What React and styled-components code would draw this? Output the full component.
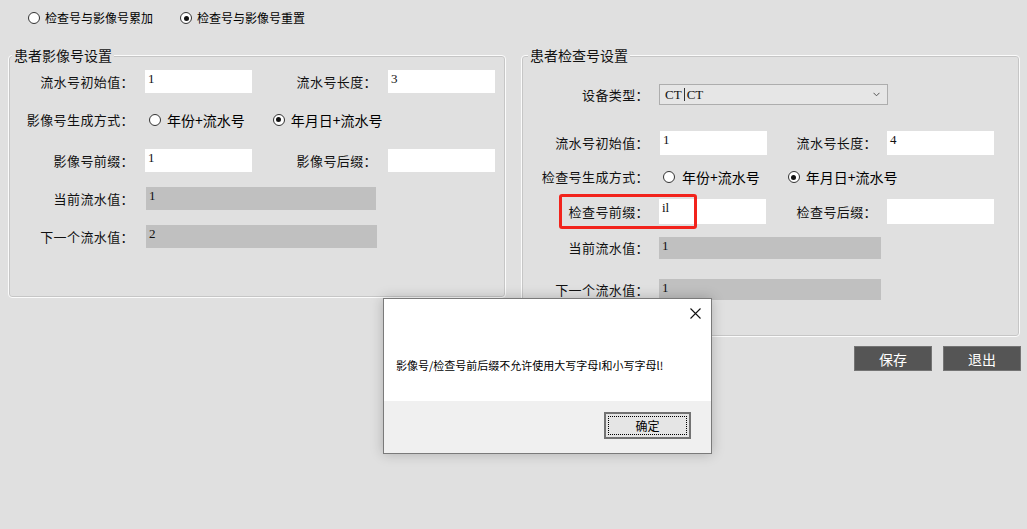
import React from 'react';
import styled, { createGlobalStyle } from 'styled-components';

const Global = createGlobalStyle`
  html, body { margin: 0; padding: 0; background: #e0e0e0; }
  body { font-family: "Noto Sans CJK SC", "Noto Sans", sans-serif; }
`;

const Page = styled.div`
  position: relative;
  width: 1027px;
  height: 529px;
  overflow: hidden;
  background: #e0e0e0;
  color: #000;
  font-family: "Noto Sans CJK SC", "Noto Sans", sans-serif;
`;

const TopBar = styled.div`
  display: flex;
  align-items: center;
  height: 36px;
  padding-left: 28px;
  gap: 27px;
`;

const RadioOption = styled.label`
  display: inline-flex;
  align-items: center;
  gap: ${p => p.$gap || 5}px;
  font-size: ${p => p.$size || 12}px;
  line-height: 16px;
  white-space: nowrap;
`;

const Circle = styled.span`
  position: relative;
  flex: none;
  width: 12px;
  height: 12px;
  box-sizing: border-box;
  border: 1px solid #333;
  border-radius: 50%;
  background: #fff;
  &::after {
    content: '';
    display: ${p => (p.$on ? 'block' : 'none')};
    position: absolute;
    left: 2.5px;
    top: 2.5px;
    width: 5px;
    height: 5px;
    border-radius: 50%;
    background: #111;
  }
`;

const Panels = styled.div`
  display: flex;
  align-items: flex-start;
  gap: 15px;
  padding-left: 8px;
  margin-top: 9px;
`;

const Group = styled.fieldset`
  margin: 0;
  padding: 0 0 ${p => p.$pb}px 0;
  min-width: 0;
  width: ${p => p.$w}px;
  box-sizing: border-box;
  border: 1px solid #fbfbfb;
  border-radius: 4px;
  box-shadow: inset 0 0 0 1px #c6c6c6;
`;

const Legend = styled.legend`
  margin-left: ${p => p.$ml}px;
  padding: 0 2px;
  font-size: 14px;
  line-height: 20px;
  background: #e0e0e0;
  color: #111;
`;

const Row = styled.div`
  display: flex;
  align-items: center;
  height: ${p => p.$h}px;
  margin-top: ${p => p.$mt}px;
`;

const Label = styled.span`
  flex: none;
  width: ${p => p.$w}px;
  margin-right: ${p => p.$gap}px;
  text-align: right;
  font-size: 13px;
  line-height: 16px;
  letter-spacing: 0.4px;
  white-space: nowrap;
  color: #111;
`;

const Field = styled.div`
  flex: none;
  align-self: stretch;
  width: ${p => p.$w}px;
  box-sizing: border-box;
  padding: 1px 3px;
  background: ${p => (p.$ro ? '#c0c0c0' : '#fff')};
  font-family: "Liberation Serif", "DejaVu Serif", serif;
  font-size: 13px;
  line-height: 15px;
  color: #111;
`;

const Radios = styled.div`
  display: flex;
  align-items: center;
  gap: 28px;
  margin-left: ${p => p.$ml}px;
`;

const Select = styled.div`
  flex: none;
  align-self: stretch;
  width: 229px;
  box-sizing: border-box;
  display: flex;
  align-items: center;
  justify-content: space-between;
  padding: 0 7px 0 5px;
  background: #e6e6e6;
  border: 1px solid #adadad;
  font-family: "Liberation Serif", "DejaVu Serif", serif;
  font-size: 13px;
  color: #111;
`;

const Sep = styled.span`
  display: inline-block;
  width: 1px;
  height: 13px;
  margin: 0 2px -2px 2px;
  background: #333;
`;

const ButtonBar = styled.div`
  display: flex;
  justify-content: flex-end;
  gap: 11px;
  padding-right: 6px;
  margin-top: 9px;
`;

const Button = styled.button`
  width: 78px;
  height: 25px;
  padding: 0;
  background: #555;
  border: 1px solid #747474;
  color: #fff;
  font-family: "Noto Sans CJK SC", sans-serif;
  font-size: 14px;
  line-height: 20px;
`;

const Dialog = styled.div`
  position: absolute;
  left: 383px;
  top: 298px;
  width: 329px;
  height: 156px;
  box-sizing: border-box;
  display: flex;
  flex-direction: column;
  background: #fff;
  border: 1px solid #7a7a7a;
  box-shadow: 0 0 12px rgba(0, 0, 0, 0.22);
`;

const DialogHeader = styled.div`
  display: flex;
  justify-content: flex-end;
  height: 30px;
  box-sizing: border-box;
  padding: 9px 10px 0 0;
`;

const DialogMessage = styled.div`
  display: flex;
  align-items: center;
  height: 72px;
  padding-left: 12px;
  font-size: 11px;
  color: #000;
`;

const DialogFooter = styled.div`
  flex: 1;
  display: flex;
  justify-content: flex-end;
  align-items: flex-start;
  padding: 11px 20px 0 0;
  background: #f0f0f0;
`;

const OkButton = styled.button`
  position: relative;
  width: 87px;
  height: 27px;
  padding: 0;
  background: #e5e5e5;
  border: 2px solid #737373;
  font-family: "Noto Sans CJK SC", sans-serif;
  font-size: 12px;
  color: #000;
  &::before {
    content: '';
    position: absolute;
    inset: 2px;
    border: 1px dotted #000;
  }
`;

const Highlight = styled.div`
  position: absolute;
  left: 559px;
  top: 194px;
  width: 138px;
  height: 35px;
  box-sizing: border-box;
  border: 3px solid #f2231c;
  border-radius: 3px;
  pointer-events: none;
`;

const Radio = ({ on, children, size, gap }) => (
  <RadioOption $size={size} $gap={gap}>
    <Circle $on={on} />
    <span>{children}</span>
  </RadioOption>
);

export default function App() {
  return (
    <Page>
      <Global />
      <TopBar>
        <Radio>检查号与影像号累加</Radio>
        <Radio on>检查号与影像号重置</Radio>
      </TopBar>

      <Panels>
        <Group $w={498} $pb={49}>
          <Legend $ml={3}>患者影像号设置</Legend>
          <Row $h={23} $mt={5}>
            <Label $w={125} $gap={11}>流水号初始值：</Label>
            <Field $w={107}>1</Field>
            <Label $w={125} $gap={11}>流水号长度：</Label>
            <Field $w={107}>3</Field>
          </Row>
          <Row $h={23} $mt={15}>
            <Label $w={125} $gap={0}>影像号生成方式：</Label>
            <Radios $ml={15}>
              <Radio size={14} gap={6}>年份+流水号</Radio>
              <Radio size={14} gap={6} on>年月日+流水号</Radio>
            </Radios>
          </Row>
          <Row $h={23} $mt={18}>
            <Label $w={125} $gap={11}>影像号前缀：</Label>
            <Field $w={107}>1</Field>
            <Label $w={125} $gap={11}>影像号后缀：</Label>
            <Field $w={107}></Field>
          </Row>
          <Row $h={23} $mt={15}>
            <Label $w={125} $gap={12}>当前流水值：</Label>
            <Field $w={230} $ro>1</Field>
          </Row>
          <Row $h={23} $mt={15}>
            <Label $w={125} $gap={12}>下一个流水值：</Label>
            <Field $w={231} $ro>2</Field>
          </Row>
        </Group>

        <Group $w={499} $pb={36}>
          <Legend $ml={6}>患者检查号设置</Legend>
          <Row $h={21} $mt={19}>
            <Label $w={127} $gap={10}>设备类型：</Label>
            <Select>
              <span>CT<Sep />CT</span>
              <svg width="7" height="5" viewBox="0 0 7 5">
                <path d="M0.5 0.8 L3.5 3.8 L6.5 0.8" fill="none" stroke="#555" strokeWidth="1" />
              </svg>
            </Select>
          </Row>
          <Row $h={24} $mt={26}>
            <Label $w={127} $gap={11}>流水号初始值：</Label>
            <Field $w={107}>1</Field>
            <Label $w={110} $gap={10}>流水号长度：</Label>
            <Field $w={107}>4</Field>
          </Row>
          <Row $h={24} $mt={10}>
            <Label $w={127} $gap={0}>检查号生成方式：</Label>
            <Radios $ml={14}>
              <Radio size={14} gap={7}>年份+流水号</Radio>
              <Radio size={14} gap={6} on>年月日+流水号</Radio>
            </Radios>
          </Row>
          <Row $h={25} $mt={10}>
            <Label $w={127} $gap={10}>检查号前缀：</Label>
            <Field $w={107}>il</Field>
            <Label $w={111} $gap={10}>检查号后缀：</Label>
            <Field $w={107}></Field>
          </Row>
          <Row $h={22} $mt={13}>
            <Label $w={127} $gap={10}>当前流水值：</Label>
            <Field $w={222} $ro>1</Field>
          </Row>
          <Row $h={21} $mt={20}>
            <Label $w={127} $gap={10}>下一个流水值：</Label>
            <Field $w={222} $ro>1</Field>
          </Row>
        </Group>
      </Panels>

      <ButtonBar>
        <Button>保存</Button>
        <Button>退出</Button>
      </ButtonBar>

      <Highlight />

      <Dialog>
        <DialogHeader>
          <svg width="11" height="11" viewBox="0 0 11 11">
            <path d="M0.5 0.5 L10.5 10.5 M10.5 0.5 L0.5 10.5" stroke="#111" strokeWidth="1.1" fill="none" />
          </svg>
        </DialogHeader>
        <DialogMessage>影像号/检查号前后缀不允许使用大写字母I和小写字母l!</DialogMessage>
        <DialogFooter>
          <OkButton>确定</OkButton>
        </DialogFooter>
      </Dialog>
    </Page>
  );
}
